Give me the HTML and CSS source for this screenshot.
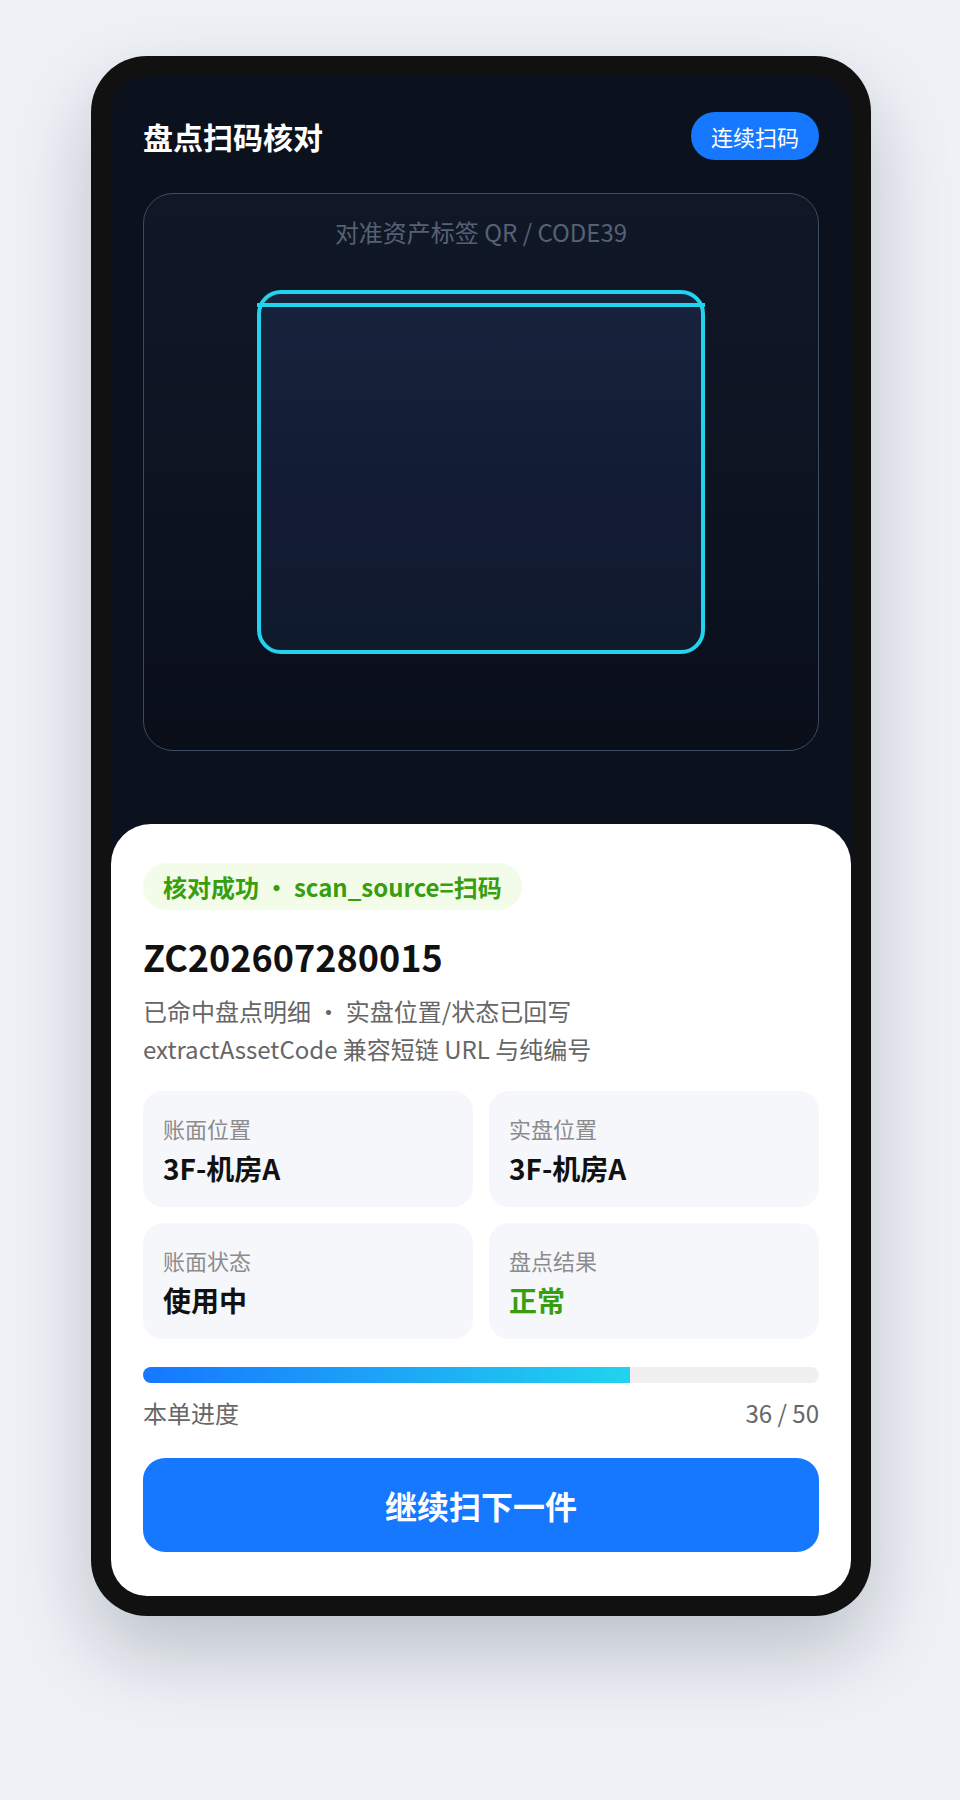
FILE: index.html
```html
<!DOCTYPE html>
<html lang="zh-CN">
<head>
<meta charset="utf-8">
<title>盘点扫码核对</title>
<link rel="stylesheet" href="styles.css">
</head>
<body>
<div class="stage">
  <div class="phone">
    <div class="screen">
      <div class="scan-area">
        <div class="topbar">
          <h1 class="title">盘点扫码核对</h1>
          <button class="pill">连续扫码</button>
        </div>
        <div class="scanner">
          <div class="scanner-tip">对准资产标签 QR / CODE39</div>
          <div class="frame">
            <div class="scan-line"></div>
          </div>
        </div>
      </div>
      <div class="sheet">
        <div class="badge">核对成功 · scan_source=扫码</div>
        <div class="code">ZC202607280015</div>
        <p class="desc">已命中盘点明细 · 实盘位置/状态已回写<br>extractAssetCode 兼容短链 URL 与纯编号</p>
        <div class="grid">
          <div class="cell"><div class="cell-label">账面位置</div><div class="cell-value">3F-机房A</div></div>
          <div class="cell"><div class="cell-label">实盘位置</div><div class="cell-value">3F-机房A</div></div>
          <div class="cell"><div class="cell-label">账面状态</div><div class="cell-value">使用中</div></div>
          <div class="cell"><div class="cell-label">盘点结果</div><div class="cell-value ok">正常</div></div>
        </div>
        <div class="track"><div class="fill" style="width:72%"></div></div>
        <div class="progress-row"><span>本单进度</span><span>36 / 50</span></div>
        <button class="primary">继续扫下一件</button>
      </div>
    </div>
  </div>
</div>
</body>
</html>
```
FILE: styles.css
```css
* { box-sizing: border-box; }
html, body { margin: 0; padding: 0; }
body {
  background: #eef1f6;
  font-family: "Noto Sans CJK SC", "Noto Sans", sans-serif;
  min-height: 1800px;
}
.stage {
  display: flex;
  justify-content: center;
  padding-top: 56px;
  padding-left: 2px;
}
.phone {
  width: 780px;
  padding: 20px;
  background: #111111;
  border-radius: 56px;
  box-shadow: 0 36px 80px rgba(15, 23, 42, 0.22);
}
.screen {
  background: #0b111d;
  border-radius: 36px;
  overflow: hidden;
  display: flex;
  flex-direction: column;
}
.scan-area {
  padding: 36px 32px 73px;
}
.topbar {
  height: 48px;
  display: flex;
  align-items: center;
  justify-content: space-between;
}
.title {
  margin: 0;
  color: #ffffff;
  font-size: 30px;
  font-weight: 700;
  line-height: 48px;
}
.pill {
  height: 48px;
  padding: 0 20px;
  border: none;
  border-radius: 24px;
  background: #1677ff;
  color: #ffffff;
  font-family: inherit;
  font-size: 22px;
  line-height: 48px;
}
.scanner {
  position: relative;
  margin-top: 33px;
  height: 558px;
  border: 1.5px solid #3d4b60;
  border-radius: 30px;
  background: linear-gradient(180deg, #101828 0%, #0d1422 50%, #090e19 100%);
  display: flex;
  align-items: center;
  justify-content: center;
}
.scanner-tip {
  position: absolute;
  top: 22px;
  left: 0;
  right: 0;
  text-align: center;
  color: #566173;
  font-size: 24px;
  line-height: 32px;
}
.frame {
  position: relative;
  width: 448px;
  height: 364px;
  border: 4px solid #22d3ee;
  border-radius: 24px;
  background: linear-gradient(180deg, #17233c 0%, #131c35 50%, #101a2d 100%);
}
.scan-line {
  position: absolute;
  top: 9px;
  left: -4px;
  right: -4px;
  height: 4px;
  background: #22d3ee;
}
.sheet {
  background: #ffffff;
  border-radius: 40px 40px 0 0;
  padding: 39px 32px 44px;
  display: flex;
  flex-direction: column;
  align-items: flex-start;
}
.badge {
  padding: 8px 20px;
  border-radius: 24px;
  background: #f3fce9;
  color: #389e0d;
  font-size: 24px;
  font-weight: 700;
  line-height: 31px;
}
.code {
  margin-top: 22px;
  color: #111111;
  font-size: 36px;
  font-weight: 700;
  line-height: 48px;
}
.desc {
  margin: 12px 0 0;
  color: #666666;
  font-size: 24px;
  line-height: 38px;
}
.grid {
  margin-top: 23px;
  width: 100%;
  display: grid;
  grid-template-columns: 1fr 1fr;
  gap: 16px;
}
.cell {
  background: #f5f7fb;
  border-radius: 20px;
  padding: 22px 20px 21px;
  height: 116px;
}
.cell-label {
  color: #8c8c8c;
  font-size: 22px;
  line-height: 30px;
}
.cell-value {
  margin-top: 7px;
  color: #111111;
  font-size: 28px;
  font-weight: 700;
  line-height: 36px;
}
.cell-value.ok { color: #389e0d; }
.track {
  margin-top: 28px;
  width: 100%;
  height: 16px;
  border-radius: 8px;
  background: #f0f0f0;
  overflow: hidden;
}
.fill {
  height: 100%;
  background: linear-gradient(90deg, #1677ff 0%, #22d3ee 100%);
}
.progress-row {
  margin-top: 14px;
  width: 100%;
  display: flex;
  justify-content: space-between;
  color: #666666;
  font-size: 24px;
  line-height: 32px;
}
.primary {
  margin-top: 29px;
  width: 100%;
  height: 94px;
  border: none;
  border-radius: 22px;
  background: #1677ff;
  color: #ffffff;
  font-family: inherit;
  font-size: 32px;
  font-weight: 700;
}
```
